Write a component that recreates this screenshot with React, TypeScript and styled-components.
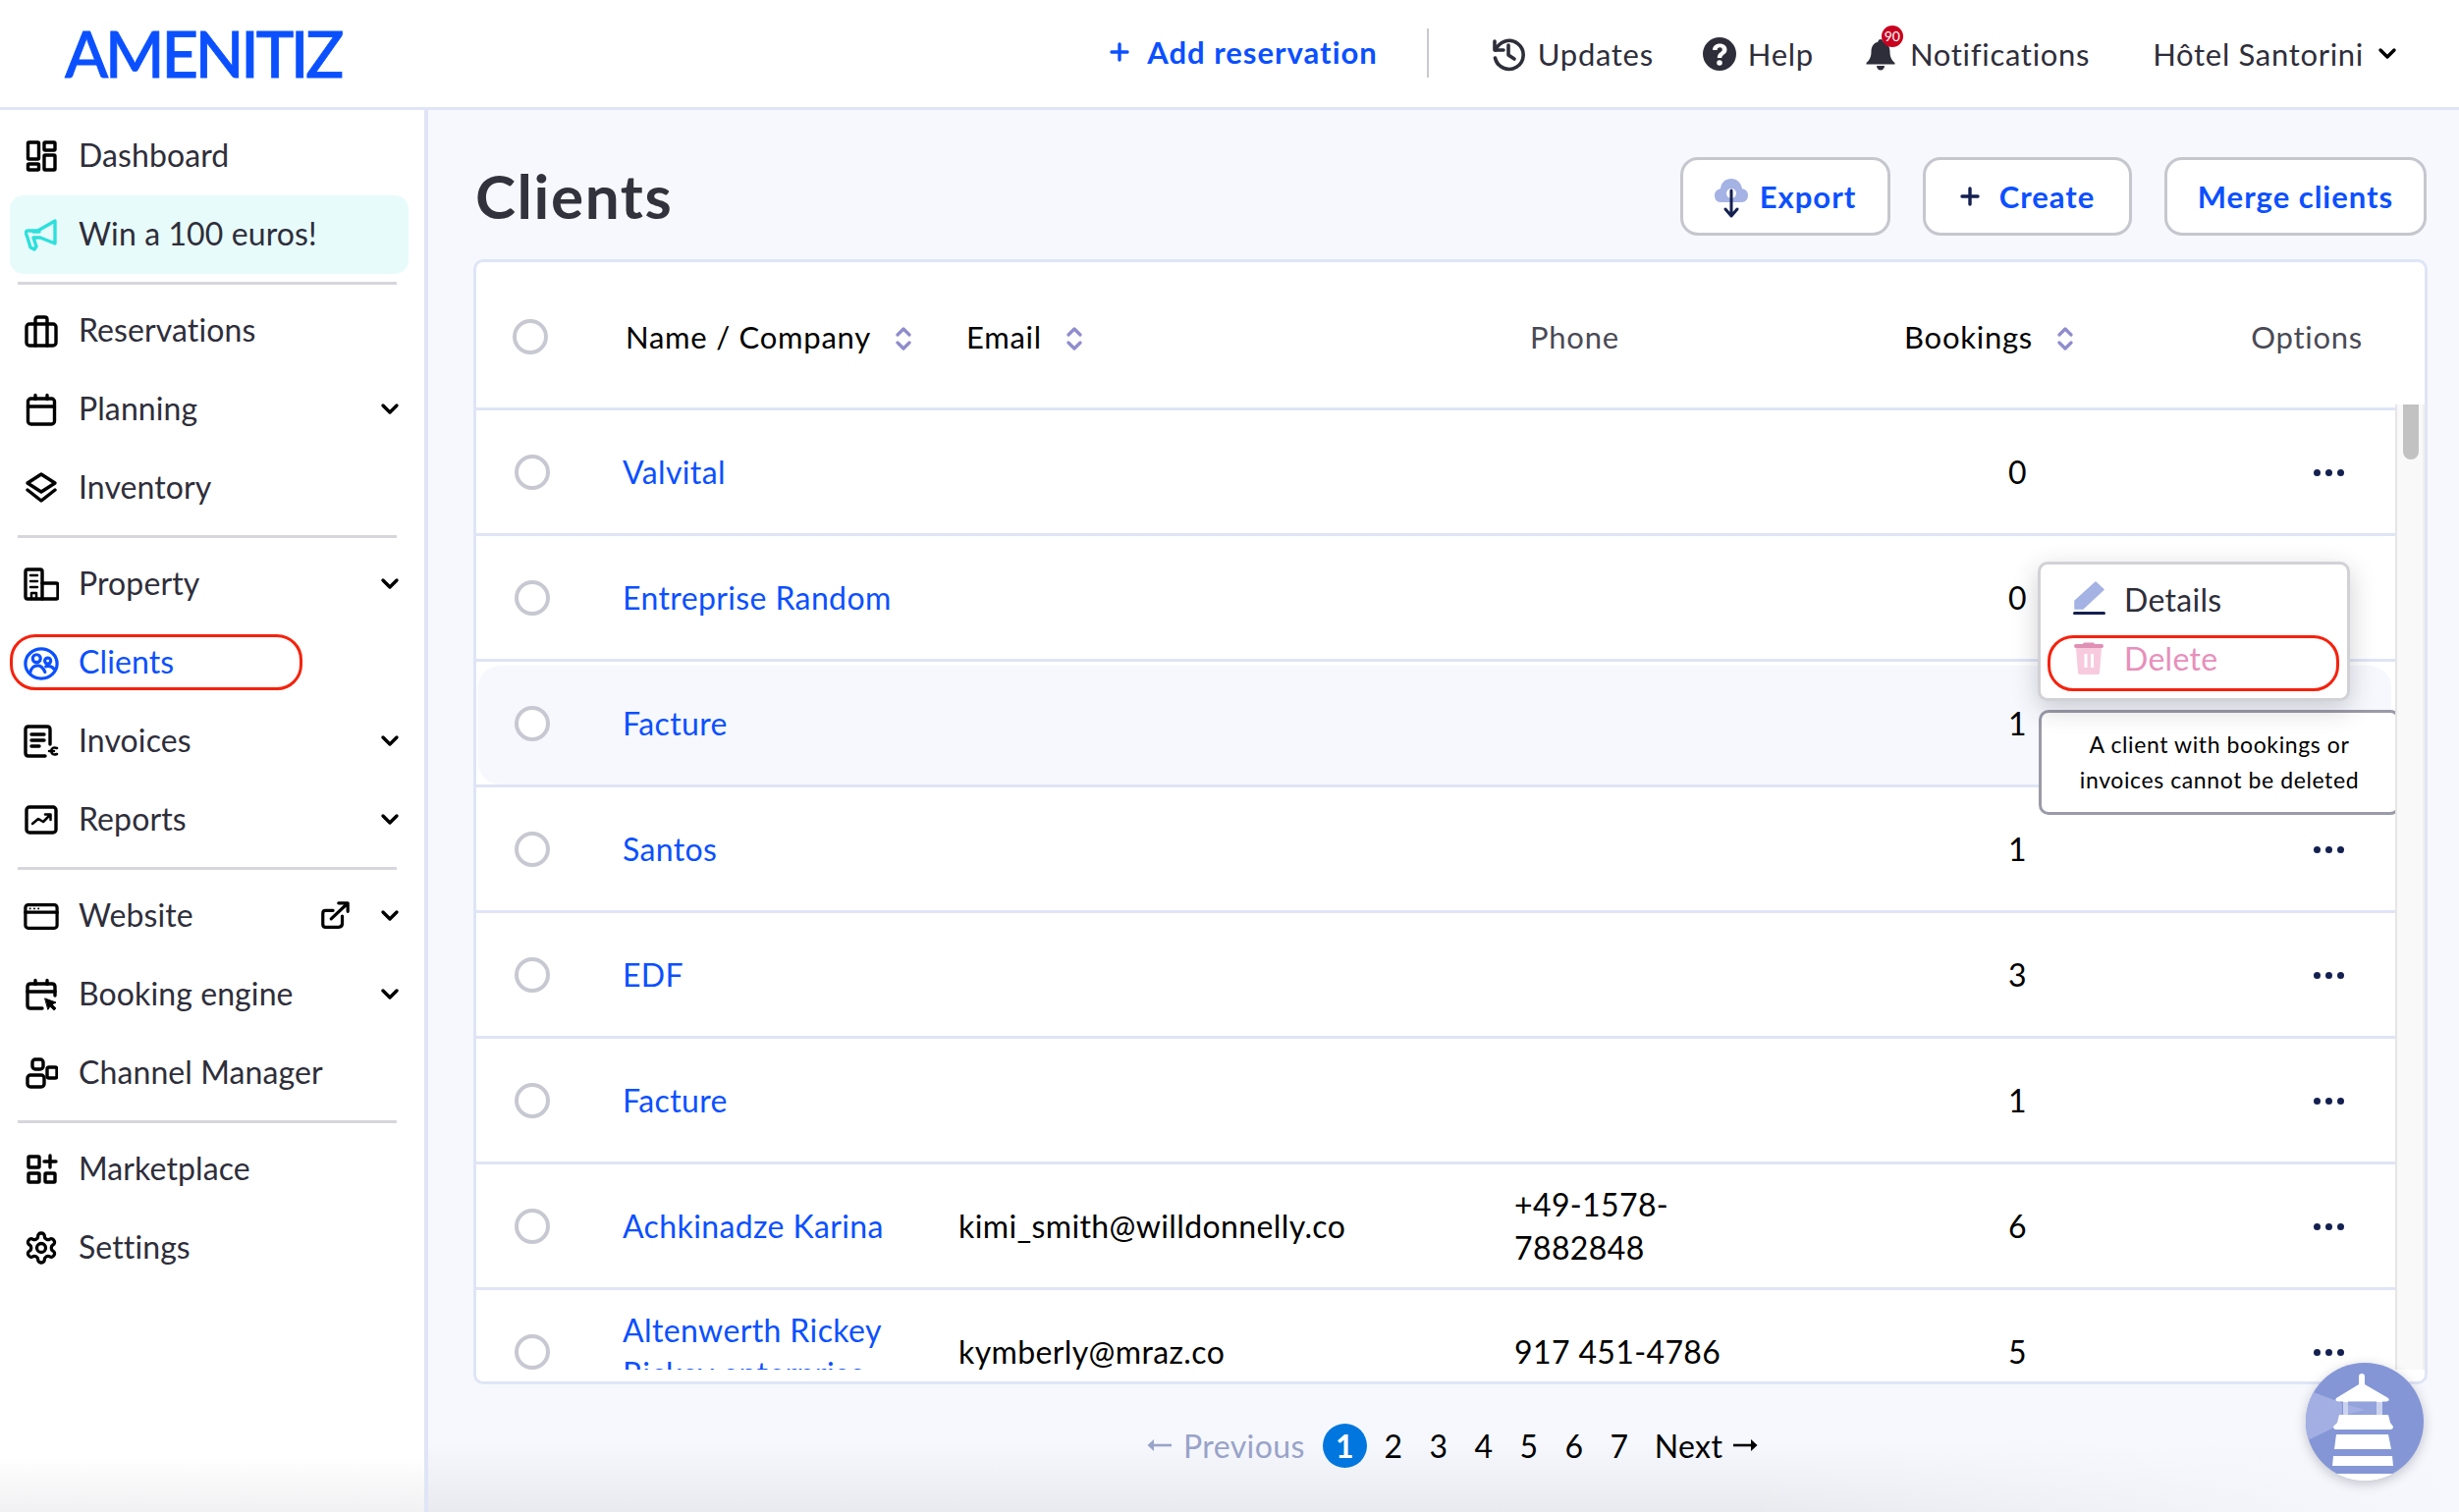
import React from "react";
import styled, { createGlobalStyle } from "styled-components";

const FONT = `"Lato", "Noto Sans", "Liberation Sans", sans-serif`;
const BLUE = "#0b50ff";
const INK = "#2e2e3a";
const LINE = "#dfe5f6";

const Global = createGlobalStyle`
  html, body { margin: 0; padding: 0; background: #f6f8fd; }
  * { box-sizing: border-box; }
  body { font-family: ${FONT}; color: ${INK}; }
`;

const Page = styled.div`
  width: 2504px;
  height: 1540px;
  overflow: hidden;
  display: flex;
  flex-direction: column;
  position: relative;
  background: #f6f8fd;
`;

const TopBar = styled.header`
  height: 112px;
  flex: none;
  background: #fff;
  border-bottom: 3px solid ${LINE};
  display: flex;
  align-items: center;
  padding: 0 63px 2px 66px;
`;

const Logo = styled.div`
  color: ${BLUE};
  font-family: "Lato", sans-serif;
  font-size: 65px;
  font-weight: 500;
  letter-spacing: -3.2px;
  -webkit-text-stroke: 0.8px ${BLUE};
  line-height: 1;
  width: 282px;
  padding-top: 2px;
`;

const TopActions = styled.nav`
  margin-left: auto;
  display: flex;
  align-items: center;
  height: 100%;
`;

const AddLink = styled.a`
  display: flex;
  align-items: center;
  gap: 18px;
  color: ${BLUE};
  font-size: 31px;
  font-weight: 700;
  letter-spacing: 1px;
  padding-bottom: 2px;
`;

const VRule = styled.span`
  width: 2px;
  height: 50px;
  background: #c9c9ce;
  margin: 0 63px 0 50px;
`;

const TopItem = styled.a<{ $gap?: number; $ml?: number }>`
  display: flex;
  align-items: center;
  gap: ${(p) => p.$gap ?? 12}px;
  margin-left: ${(p) => p.$ml ?? 0}px;
  font-size: 31px;
  letter-spacing: 0.7px;
  position: relative;
  padding-top: 3px;
`;

const Badge = styled.span`
  position: absolute;
  left: 16px;
  top: -7px;
  width: 22px;
  height: 22px;
  border-radius: 50%;
  background: #c9021f;
  color: #fff;
  font-size: 14px;
  line-height: 22px;
  text-align: center;
  letter-spacing: 0;
`;

const Body = styled.div`
  flex: 1;
  min-height: 0;
  display: flex;
`;

const Sidebar = styled.aside`
  width: 436px;
  flex: none;
  background: linear-gradient(180deg, #fff 96%, #f1f1f3 100%);
  border-right: 4px solid ${LINE};
  padding: 7px 0 0;
`;

const NavItem = styled.a<{ $active?: boolean; $promo?: boolean }>`
  height: 80px;
  margin: 0 16px 0 10px;
  display: flex;
  align-items: center;
  gap: 20px;
  padding: 0 9px 0 14px;
  font-size: 32px;
  letter-spacing: 0.1px;
  color: ${(p) => (p.$active ? BLUE : INK)};
  background: ${(p) => (p.$promo ? "#e8fbfb" : "transparent")};
  border-radius: 14px;
  position: relative;
`;

const NavIcon = styled.span`
  width: 36px;
  height: 36px;
  flex: none;
  display: flex;
  align-items: center;
  justify-content: center;
`;

const NavLabel = styled.span`
  flex: 1;
  line-height: 1;
  padding-bottom: 2px;
`;

const ExternalBox = styled.span`
  display: flex;
  margin-right: 10px;
`;

const Ring = styled.span`
  position: absolute;
  left: 0;
  top: 11px;
  height: 57px;
  width: 298px;
  border: 3px solid #f5220d;
  border-radius: 26px;
  pointer-events: none;
`;

const NavDivider = styled.hr`
  border: 0;
  height: 3px;
  background: #d6d6dc;
  margin: 8px 28px 7px 18px;
`;

const Main = styled.main`
  flex: 1;
  min-width: 0;
  padding: 48px 33px 0 46px;
  display: flex;
  flex-direction: column;
  background:
    linear-gradient(90deg, rgba(246, 248, 253, 0) 65%, #f6f8fd 100%),
    linear-gradient(180deg, #f6f8fd 0%, #f6f8fd 95%, #e9eaef 100%);
`;

const TitleRow = styled.div`
  height: 104px;
  flex: none;
  display: flex;
  align-items: flex-start;
  justify-content: space-between;
`;

const Title = styled.h1`
  margin: 0 0 0 2px;
  font-size: 62px;
  font-weight: 700;
  letter-spacing: 1.6px;
  line-height: 78px;
  color: #32323c;
`;

const Buttons = styled.div`
  display: flex;
  gap: 33px;
`;

const Button = styled.button<{ $w: number; $gap?: number }>`
  width: ${(p) => p.$w}px;
  height: 80px;
  background: #fff;
  border: 3px solid #c6c6cf;
  border-radius: 18px;
  display: flex;
  align-items: center;
  justify-content: center;
  gap: ${(p) => p.$gap ?? 12}px;
  color: ${BLUE};
  font-family: ${FONT};
  font-size: 31px;
  font-weight: 700;
  letter-spacing: 1px;
`;

const Card = styled.section`
  width: 1990px;
  height: 1146px;
  flex: none;
  background: #fff;
  border: 3px solid ${LINE};
  border-radius: 10px;
  padding-bottom: 12px;
  display: flex;
  flex-direction: column;
`;

const HeadRow = styled.div`
  height: 151px;
  flex: none;
  display: grid;
  grid-template-columns: 152px 347px 574px 381px 1fr;
  align-items: center;
  border-bottom: 3px solid ${LINE};
  padding-top: 3px;
  color: #000;
  font-size: 31px;
  letter-spacing: 0.75px;
`;

const HeadCell = styled.div<{ $muted?: boolean }>`
  display: flex;
  align-items: center;
  gap: 25px;
  color: ${(p) => (p.$muted ? "#4a4a55" : "#000")};
`;

const HeadSplit = styled.div`
  display: flex;
  align-items: center;
  justify-content: space-between;
  padding-right: 63px;
`;

const OptionsLabel = styled.span`
  color: #4a4a55;
`;

const SortMark = styled.span`
  display: flex;
  margin-top: 4px;
`;

const Check = styled.span`
  display: block;
  width: 36px;
  height: 36px;
  border: 4px solid #c8c8d2;
  border-radius: 50%;
  background: #fff;
`;

const CheckCell = styled.div<{ $pl: number }>`
  padding-left: ${(p) => p.$pl}px;
  display: flex;
  align-items: center;
`;

const ScrollArea = styled.div`
  flex: 1;
  min-height: 0;
  display: flex;
`;

const Rows = styled.div`
  flex: 1;
  min-width: 0;
  position: relative;
  overflow: hidden;
`;

const Track = styled.div`
  width: 30px;
  flex: none;
  background: #f9f9f9;
  border-left: 2px solid #e6e6e6;
  border-right: 2px solid #f0f0f0;
  margin-top: -6px;
  position: relative;
`;

const Thumb = styled.div`
  width: 16px;
  height: 56px;
  margin-left: 6px;
  background: #c2c2c2;
  border-radius: 0 0 8px 8px;
`;

const Row = styled.div<{ $hl?: boolean }>`
  height: 128px;
  display: grid;
  grid-template-columns: 149px 342px 566px 340px 182px 1fr;
  align-items: center;
  border-bottom: 3px solid ${LINE};
  font-size: 32px;
  color: #000;
  letter-spacing: 0.38px;
  background: #fff;
  position: relative;
  isolation: isolate;

  ${(p) =>
    p.$hl
      ? `&::before {
           content: "";
           position: absolute;
           inset: 4px 4px 0 2px;
           background: #f6f8fd;
           border-radius: 22px 22px 0 22px;
           z-index: -1;
         }`
      : ""}
`;

const NameCell = styled.div`
  color: ${BLUE};
  line-height: 44px;
`;

const EmailCell = styled.div``;

const PhoneCell = styled.div`
  line-height: 44px;
  width: 220px;
`;

const CountCell = styled.div`
  text-align: right;
`;

const Dots = styled.div`
  display: flex;
  justify-content: flex-end;
  gap: 5px;
  padding-right: 52px;
  padding-top: 2px;
`;

const Dot = styled.span`
  width: 7px;
  height: 7px;
  border-radius: 50%;
  background: #14204f;
`;

const Menu = styled.div`
  position: absolute;
  left: 1590px;
  top: 154px;
  width: 318px;
  height: 142px;
  background: #fff;
  border: 3px solid #d2d2d6;
  border-radius: 10px;
  box-shadow: 0 8px 26px rgba(40, 40, 60, 0.22);
  padding: 5px 0 0 32px;
  z-index: 3;
`;

const MenuItem = styled.div<{ $danger?: boolean }>`
  height: 60px;
  display: flex;
  align-items: center;
  gap: 19px;
  font-size: 32px;
  letter-spacing: 0.3px;
  color: ${(p) => (p.$danger ? "#e88fbb" : INK)};
`;

const DangerRing = styled.span`
  position: absolute;
  left: 7px;
  top: 72px;
  width: 297px;
  height: 57px;
  border: 3px solid #f5220d;
  border-radius: 26px;
`;

const Tip = styled.div`
  position: absolute;
  left: 1591px;
  top: 305px;
  width: 368px;
  height: 107px;
  background: #fff;
  border: 3px solid #9a9aa8;
  border-radius: 10px;
  color: #000;
  font-size: 23px;
  line-height: 36px;
  letter-spacing: 0.6px;
  text-align: center;
  padding-top: 14px;
  z-index: 2;
`;

const Pager = styled.nav`
  height: 124px;
  flex: none;
  display: flex;
  align-items: center;
  padding-left: 685px;
  font-size: 32px;
  letter-spacing: 0.4px;
  color: #000;
`;

const PagerPrev = styled.span`
  color: #99a3c8;
  display: flex;
  align-items: center;
  gap: 12px;
  margin-right: 18px;
`;

const PagerNext = styled.span`
  display: flex;
  align-items: center;
  gap: 11px;
  margin-left: 13px;
`;

const PageNum = styled.span<{ $on?: boolean }>`
  width: ${(p) => (p.$on ? 45 : 46)}px;
  height: 45px;
  margin-right: ${(p) => (p.$on ? 4 : 0)}px;
  border-radius: 50%;
  display: flex;
  align-items: center;
  justify-content: center;
  background: ${(p) => (p.$on ? "#0076de" : "transparent")};
  color: ${(p) => (p.$on ? "#fff" : "#000")};
  font-weight: ${(p) => (p.$on ? 700 : 400)};
  letter-spacing: 0;
`;

const Beacon = styled.div`
  position: absolute;
  left: 2348px;
  top: 1388px;
  width: 120px;
  height: 120px;
  border-radius: 50%;
  background: #8496d6;
  overflow: hidden;
  box-shadow: 0 3px 12px rgba(40, 40, 60, 0.25);
  z-index: 5;
`;

type P = { size?: number; color?: string };
const Ic: React.FC<P & { children: React.ReactNode; w?: number }> = ({ size = 34, w, color = "#000", children }) => (
  <svg width={w ?? size} height={size} viewBox={`0 0 ${w ?? 34} 34`} fill="none" stroke={color} strokeWidth={3.4} strokeLinecap="round" strokeLinejoin="round">
    {children}
  </svg>
);

const Dashboard = () => (
  <Ic>
    <rect x="3.500" y="3" width="11" height="17" rx="1" />
    <rect x="20" y="3" width="11" height="8" rx="1" />
    <rect x="3.500" y="25" width="11" height="6" rx="1" />
    <rect x="20" y="16" width="11" height="15" rx="1" />
  </Ic>
);
const Megaphone = () => (
  <Ic color="#2de0dc">
    <path d="M31 3v23L16 20l-7 0 3 9-2 3-4-2-3-10-1.500-4c-.5-2 .5-3 2-3h10z" />
    <path d="M9 14h6" />
  </Ic>
);
const Briefcase = () => (
  <Ic>
    <rect x="2" y="10" width="30" height="22" rx="3" />
    <path d="M11 32V5.500Q11 3 13.500 3h7Q23 3 23 5.500V32" />
  </Ic>
);
const Calendar = () => (
  <Ic>
    <rect x="3.500" y="6" width="27" height="26" rx="3" />
    <path d="M3.500 14h27M11 2.500v4M23 2.500v4" />
  </Ic>
);
const Layers = () => (
  <Ic>
    <path d="M17 3 31 12 17 21 3 12Z" />
    <path d="M3 19 17 30 31 19" />
  </Ic>
);
const Property = () => (
  <Ic w={36}>
    <path d="M2 4q0-2 2-2h13q2 0 2 2v28H4q-2 0-2-2z" />
    <path d="M19 16h14q2 0 2 2v12q0 2-2 2H19" />
    <path d="M7 8h7M7 14h7M7 20h7M8 32v-6h5v6" strokeWidth={2.5} />
  </Ic>
);
const ClientsIcon = () => (
  <Ic w={38} size={36} color={BLUE}>
    <ellipse cx="19" cy="18" rx="17" ry="16" />
    <circle cx="14" cy="12.500" r="4.200" />
    <circle cx="26" cy="15" r="3.200" />
    <path d="M7 28c1-6 5-8 8-8s6 2 8 7M24 21c3-1 7 0 9 3" />
  </Ic>
);
const Invoice = () => (
  <Ic w={36}>
    <path d="M27 20V5q0-3-3-3H5Q2 2 2 5v24q0 3 3 3h17" />
    <path d="M8 10h13M8 16h13M8 22h8" />
    <path d="M34 24q-5-2-6 3 1 5 6 3M26 27h5" strokeWidth={2.5} />
  </Ic>
);
const ReportsIcon = () => (
  <Ic>
    <rect x="2" y="4" width="30" height="26" rx="3" />
    <path d="M8 21l6-5 5 3 7-7M21 11.500h5.500V17" strokeWidth={2.5} />
  </Ic>
);
const WebsiteIcon = () => (
  <Ic w={38}>
    <rect x="2" y="5" width="34" height="25" rx="3" />
    <path d="M2 13h34" />
    <path d="M7 9h.1M11.500 9h.1M16 9h.1" strokeWidth={2} />
  </Ic>
);
const External = () => (
  <Ic w={32} size={32}>
    <path d="M24 17v8q0 4-4 4H6q-3 0-3-3V14q0-3 3-3h8" />
    <path d="M12 20 29 4M20 3h10v9" />
  </Ic>
);
const BookingIcon = () => (
  <Ic>
    <path d="M18 31H6q-3 0-3-3V9q0-3 3-3h22q3 0 3 3v9" />
    <path d="M3 14h28M11 2.500v4M23 2.500v4" />
    <path d="M21 21l11 4-4 2 4 4-2 2-4-4-2 3z" fill="#000" strokeWidth={1} />
  </Ic>
);
const ChannelIcon = () => (
  <Ic>
    <rect x="8" y="3" width="11" height="10" rx="3" />
    <rect x="3" y="19" width="17" height="12" rx="3" />
    <rect x="23" y="11" width="10" height="11" rx="2" />
  </Ic>
);
const MarketIcon = () => (
  <Ic>
    <rect x="4" y="4" width="11" height="11" rx="1" />
    <rect x="4" y="21" width="11" height="9" rx="1" />
    <rect x="21" y="21" width="10" height="9" rx="1" />
    <path d="M26 3v12M20 9h12" />
  </Ic>
);
const Gear = () => (
  <svg width="36" height="36" viewBox="0 0 24 24" fill="none" stroke="#000" strokeWidth="2.200" strokeLinecap="round" strokeLinejoin="round">
    <path d="M12.220 2h-.44a2 2 0 0 0-2 2v.18a2 2 0 0 1-1 1.730l-.43.25a2 2 0 0 1-2 0l-.15-.08a2 2 0 0 0-2.730.73l-.22.38a2 2 0 0 0 .73 2.730l.15.1a2 2 0 0 1 1 1.720v.51a2 2 0 0 1-1 1.740l-.15.09a2 2 0 0 0-.73 2.730l.22.38a2 2 0 0 0 2.730.73l.15-.08a2 2 0 0 1 2 0l.43.25a2 2 0 0 1 1 1.730V20a2 2 0 0 0 2 2h.44a2 2 0 0 0 2-2v-.18a2 2 0 0 1 1-1.730l.43-.25a2 2 0 0 1 2 0l.15.08a2 2 0 0 0 2.730-.73l.22-.39a2 2 0 0 0-.73-2.730l-.15-.08a2 2 0 0 1-1-1.740v-.5a2 2 0 0 1 1-1.740l.15-.09a2 2 0 0 0 .73-2.730l-.22-.38a2 2 0 0 0-2.730-.73l-.15.08a2 2 0 0 1-2 0l-.43-.25a2 2 0 0 1-1-1.730V4a2 2 0 0 0-2-2z" />
    <circle cx="12" cy="12" r="3" />
  </svg>
);
const Chevron = ({ size = 20, color = "#000" }: P) => (
  <svg width={size} height={size * 0.7} viewBox="0 0 20 14" fill="none" stroke={color} strokeWidth={3.4} strokeLinecap="round" strokeLinejoin="round">
    <path d="M3 3l7 7 7-7" />
  </svg>
);
const Plus = ({ size = 20, color = BLUE }: P) => (
  <svg width={size} height={size} viewBox="0 0 20 20" stroke={color} strokeWidth={3.4} strokeLinecap="round">
    <path d="M10 2v16M2 10h16" />
  </svg>
);
const History = () => (
  <svg width="36" height="36" viewBox="0 0 36 36" fill="none" stroke="#2e2e3a" strokeWidth="3.600" strokeLinecap="round" strokeLinejoin="round">
    <path d="M4 5v9h9" />
    <path d="M5 14A14.500 14.500 0 1 1 4.500 22" />
    <path d="M18 9v10l6 4" />
  </svg>
);
const HelpIcon = () => (
  <svg width="34" height="34" viewBox="0 0 34 34">
    <circle cx="17" cy="17" r="17" fill="#2e2e3a" />
    <path d="M10 13c0-4 3-6.500 7.300-6.500s7.200 2.500 7.200 6c0 5-5.200 5-5.200 8.500h-4.500c0-5.500 5-5.800 5-8.500 0-1.300-1-2.200-2.500-2.200-1.600 0-2.600 1-2.700 2.700z" fill="#fff" />
    <circle cx="17" cy="26" r="2.800" fill="#fff" />
  </svg>
);
const Bell = () => (
  <svg width="30" height="34" viewBox="0 0 30 34">
    <path d="M15 2c-1.600 0-2.500 1-2.500 2.600C7.500 6 5.500 10 5.500 14.500c0 6-2 9-5 11.500v1.500h29V26c-3-2.500-5-5.500-5-11.500 0-4.500-2-8.500-7-9.900C17.500 3 16.600 2 15 2z" fill="#2e2e3a" />
    <path d="M11 29h8c0 2.500-1.800 4.500-4 4.500S11 31.500 11 29z" fill="#2e2e3a" />
  </svg>
);
const CloudDown = () => (
  <svg width="34" height="46" viewBox="0 0 34 46">
    <path d="M6 29C2 29 0 26 0 22c0-4 3-6.500 6-6.800C6.500 9 11 5 17 5c5.500 0 10 4 11 10.200 3.500.3 6 3 6 6.800 0 4-2.500 7-6.500 7z" fill="#a4b2e4" />
    <circle cx="17" cy="20" r="5" fill="#fff" />
    <path d="M17 17v26M11 36l6 7 6-7" fill="none" stroke="#14204f" strokeWidth="3" strokeLinecap="round" strokeLinejoin="round" />
  </svg>
);
const Pencil = () => (
  <svg width="34" height="36" viewBox="0 0 34 36">
    <path d="M24 1 32 8.500 11 28H3v-8z" fill="#a4b2e4" strokeLinejoin="round" stroke="#a4b2e4" strokeWidth="1.500" />
    <rect x="1" y="31" width="33" height="3" rx="1.500" fill="#14204f" />
  </svg>
);
const Trash = () => (
  <svg width="34" height="36" viewBox="0 0 34 36">
    <path d="M4 8h26l-2 25q0 2-2 2H8q-2 0-2-2z" fill="#f7cade" />
    <path d="M4 6h26" stroke="#e08fb5" strokeWidth="4" strokeLinecap="round" />
    <path d="M12 2.500h10l2 3H10z" fill="#e08fb5" />
    <rect x="12.500" y="14" width="3" height="14" fill="#fff" />
    <rect x="19" y="14" width="3" height="14" fill="#fff" />
  </svg>
);
const Sort = () => (
  <SortMark>
    <svg width="16" height="26" viewBox="0 0 16 26" fill="none" stroke="#8f8ccd" strokeWidth="3.200" strokeLinecap="round" strokeLinejoin="round">
      <path d="M2 9l6-6 6 6M2 17l6 6 6-6" />
    </svg>
  </SortMark>
);
const ArrowL = () => (
  <svg width="26" height="18" viewBox="0 0 26 18" fill="none" stroke="#99a3c8" strokeWidth="2.600">
    <path d="M26 9H4" />
    <path d="M8 3 1.500 9 8 15z" fill="#99a3c8" stroke="none" />
  </svg>
);
const ArrowR = () => (
  <svg width="26" height="18" viewBox="0 0 26 18" fill="none" stroke="#000" strokeWidth="2.600">
    <path d="M0 9h22" />
    <path d="M18 3l6.500 6-6.500 6z" fill="#000" stroke="none" />
  </svg>
);
const Lighthouse = () => (
  <svg width="120" height="120" viewBox="0 0 120 120">
    <path d="M0 27 37 41V62L0 80z" fill="#a3afe2" />
    <path d="M54 14q0-3 3-3t3 3v8L84 36q2 3-2 3.500H33q-4-.5-2-3.500L54 22z" fill="#fff" />
    <path d="M38 39h5v14h-5zM72 39h6v14h-6z" fill="#fff" />
    <rect x="38" y="40" width="40" height="13" fill="#a3afe2" opacity="0.55" />
    <path d="M43 43l17 5-17 4.500z" fill="#a3afe2" />
    <path d="M34 53h50l2 8 3 4q0 3-3 3H31q-3 0-3-3l4-4z" fill="#fff" />
    <path d="M31 73h53l3 15H29z" fill="#fff" />
    <path d="M28 95h60l1 10H27z" fill="#fff" />
    <path d="M32 113h58v8H32z" fill="#fff" />
    <path d="M0 113h120v8H0z" fill="#fff" />
  </svg>
);

const navGroups: { label: string; icon: React.ReactNode; chevron?: boolean; promo?: boolean; active?: boolean; ext?: boolean }[][] = [
  [
    { label: "Dashboard", icon: <Dashboard /> },
    { label: "Win a 100 euros!", icon: <Megaphone />, promo: true },
  ],
  [
    { label: "Reservations", icon: <Briefcase /> },
    { label: "Planning", icon: <Calendar />, chevron: true },
    { label: "Inventory", icon: <Layers /> },
  ],
  [
    { label: "Property", icon: <Property />, chevron: true },
    { label: "Clients", icon: <ClientsIcon />, active: true },
    { label: "Invoices", icon: <Invoice />, chevron: true },
    { label: "Reports", icon: <ReportsIcon />, chevron: true },
  ],
  [
    { label: "Website", icon: <WebsiteIcon />, chevron: true, ext: true },
    { label: "Booking engine", icon: <BookingIcon />, chevron: true },
    { label: "Channel Manager", icon: <ChannelIcon /> },
  ],
  [
    { label: "Marketplace", icon: <MarketIcon /> },
    { label: "Settings", icon: <Gear /> },
  ],
];

const rows: { name: React.ReactNode; email?: string; phone?: React.ReactNode; n: number; hl?: boolean; dots?: boolean }[] = [
  { name: "Valvital", n: 0, dots: true },
  { name: "Entreprise Random", n: 0 },
  { name: "Facture", n: 1, hl: true },
  { name: "Santos", n: 1, dots: true },
  { name: "EDF", n: 3, dots: true },
  { name: "Facture", n: 1, dots: true },
  { name: "Achkinadze Karina", email: "kimi_smith@willdonnelly.co", phone: "+49-1578-7882848", n: 6, dots: true },
  { name: <>Altenwerth Rickey<br />Rickey enterprise</>, email: "kymberly@mraz.co", phone: "917 451-4786", n: 5, dots: true },
];

export default function App() {
  return (
    <Page>
      <Global />
      <TopBar>
        <Logo>AMENITIZ</Logo>
        <TopActions>
          <AddLink><Plus /> Add reservation</AddLink>
          <VRule />
          <TopItem><History /> Updates</TopItem>
          <TopItem $ml={50}><HelpIcon /> Help</TopItem>
          <TopItem $ml={53} $gap={15}><Bell /><Badge>90</Badge> Notifications</TopItem>
          <TopItem $ml={64} $gap={14}>Hôtel Santorini <Chevron /></TopItem>
        </TopActions>
      </TopBar>
      <Body>
        <Sidebar>
          {navGroups.map((g, i) => (
            <React.Fragment key={i}>
              {i > 0 && <NavDivider />}
              {g.map((it) => (
                <NavItem key={it.label} $active={it.active} $promo={it.promo}>
                  <NavIcon>{it.icon}</NavIcon>
                  <NavLabel>{it.label}</NavLabel>
                  {it.ext && <ExternalBox><External /></ExternalBox>}
                  {it.chevron && <Chevron />}
                  {it.active && <Ring />}
                </NavItem>
              ))}
            </React.Fragment>
          ))}
        </Sidebar>
        <Main>
          <TitleRow>
            <Title>Clients</Title>
            <Buttons>
              <Button $w={214}><CloudDown /> Export</Button>
              <Button $w={213} $gap={20}><Plus color="#14204f" /> Create</Button>
              <Button $w={267}>Merge clients</Button>
            </Buttons>
          </TitleRow>
          <Card>
            <HeadRow>
              <CheckCell $pl={37}><Check /></CheckCell>
              <HeadCell>Name / Company <Sort /></HeadCell>
              <HeadCell>Email <Sort /></HeadCell>
              <HeadCell $muted>Phone</HeadCell>
              <HeadSplit>
                <HeadCell>Bookings <Sort /></HeadCell>
                <OptionsLabel>Options</OptionsLabel>
              </HeadSplit>
            </HeadRow>
            <ScrollArea>
              <Rows>
                {rows.map((r, i) => (
                  <Row key={i} $hl={r.hl}>
                    <CheckCell $pl={39}><Check /></CheckCell>
                    <NameCell>{r.name}</NameCell>
                    <EmailCell>{r.email}</EmailCell>
                    <PhoneCell>{r.phone}</PhoneCell>
                    <CountCell>{r.n}</CountCell>
                    {r.dots ? <Dots><Dot /><Dot /><Dot /></Dots> : <div />}
                  </Row>
                ))}
                <Menu>
                  <MenuItem><Pencil /> Details</MenuItem>
                  <MenuItem $danger><Trash /> Delete</MenuItem>
                  <DangerRing />
                </Menu>
                <Tip>A client with bookings or<br />invoices cannot be deleted</Tip>
              </Rows>
              <Track><Thumb /></Track>
            </ScrollArea>
          </Card>
          <Pager>
            <PagerPrev><ArrowL /> Previous</PagerPrev>
            <PageNum $on>1</PageNum>
            {[2, 3, 4, 5, 6, 7].map((n) => <PageNum key={n}>{n}</PageNum>)}
            <PagerNext>Next <ArrowR /></PagerNext>
          </Pager>
        </Main>
      </Body>
      <Beacon><Lighthouse /></Beacon>
    </Page>
  );
}
